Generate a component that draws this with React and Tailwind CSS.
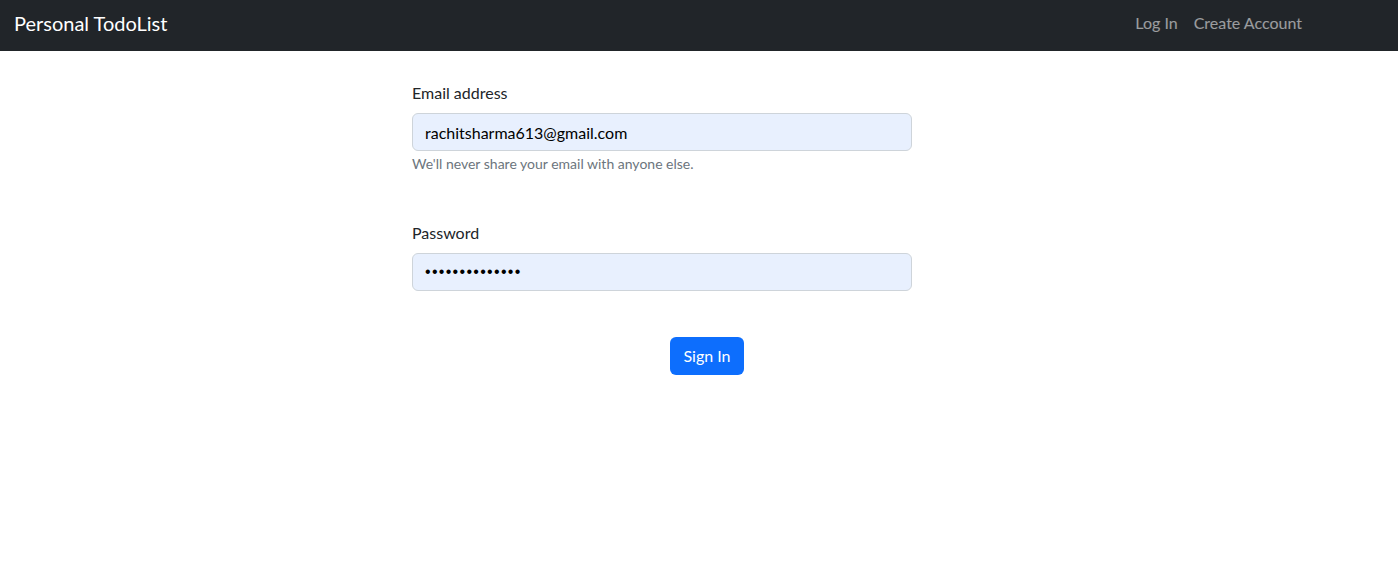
import React from "react";

const App = () => {
  return (
    <div className="min-h-[570px] bg-white font-['Segoe_UI','Lato','Noto_Sans',sans-serif] text-[#212529]">
      <nav className="h-[51px] bg-[#212529] flex items-center justify-between pl-[14px] pr-[96px] pb-[5px]">
        <a className="text-[20px] leading-[30px] text-white">Personal TodoList</a>
        <div className="flex items-center gap-4 text-[16px] text-white/55">
          <a>Log In</a>
          <a>Create Account</a>
        </div>
      </nav>

      <form className="ml-[412px] w-[500px] pt-[30px]">
        <div>
          <label className="block text-[16px] leading-6 mb-2">Email address</label>
          <input
            type="email"
            defaultValue="rachitsharma613@gmail.com"
            className="block w-full h-[38px] px-3 text-[16px] bg-[#e8f0fe] border border-[#ced4da] rounded-[6px] outline-none text-black"
          />
          <div className="mt-[2px] text-[14px] leading-[21px] text-[#6c757d]">
            We'll never share your email with anyone else.
          </div>
        </div>

        <div className="mt-[47px]">
          <label className="block text-[16px] leading-6 mb-2">Password</label>
          <input
            type="password"
            defaultValue="rachitsharma61"
            className="block w-full h-[38px] px-3 text-[16px] tracking-[1.3px] font-['Liberation_Sans',sans-serif] bg-[#e8f0fe] border border-[#ced4da] rounded-[6px] outline-none text-black"
          />
        </div>

        <div className="mt-[46px] flex justify-center pl-[90px]">
          <button
            type="button"
            className="h-[38px] w-[74px] bg-[#0d6efd] text-white text-[16px] rounded-[6px]"
          >
            Sign In
          </button>
        </div>
      </form>
    </div>
  );
};

export default App;
